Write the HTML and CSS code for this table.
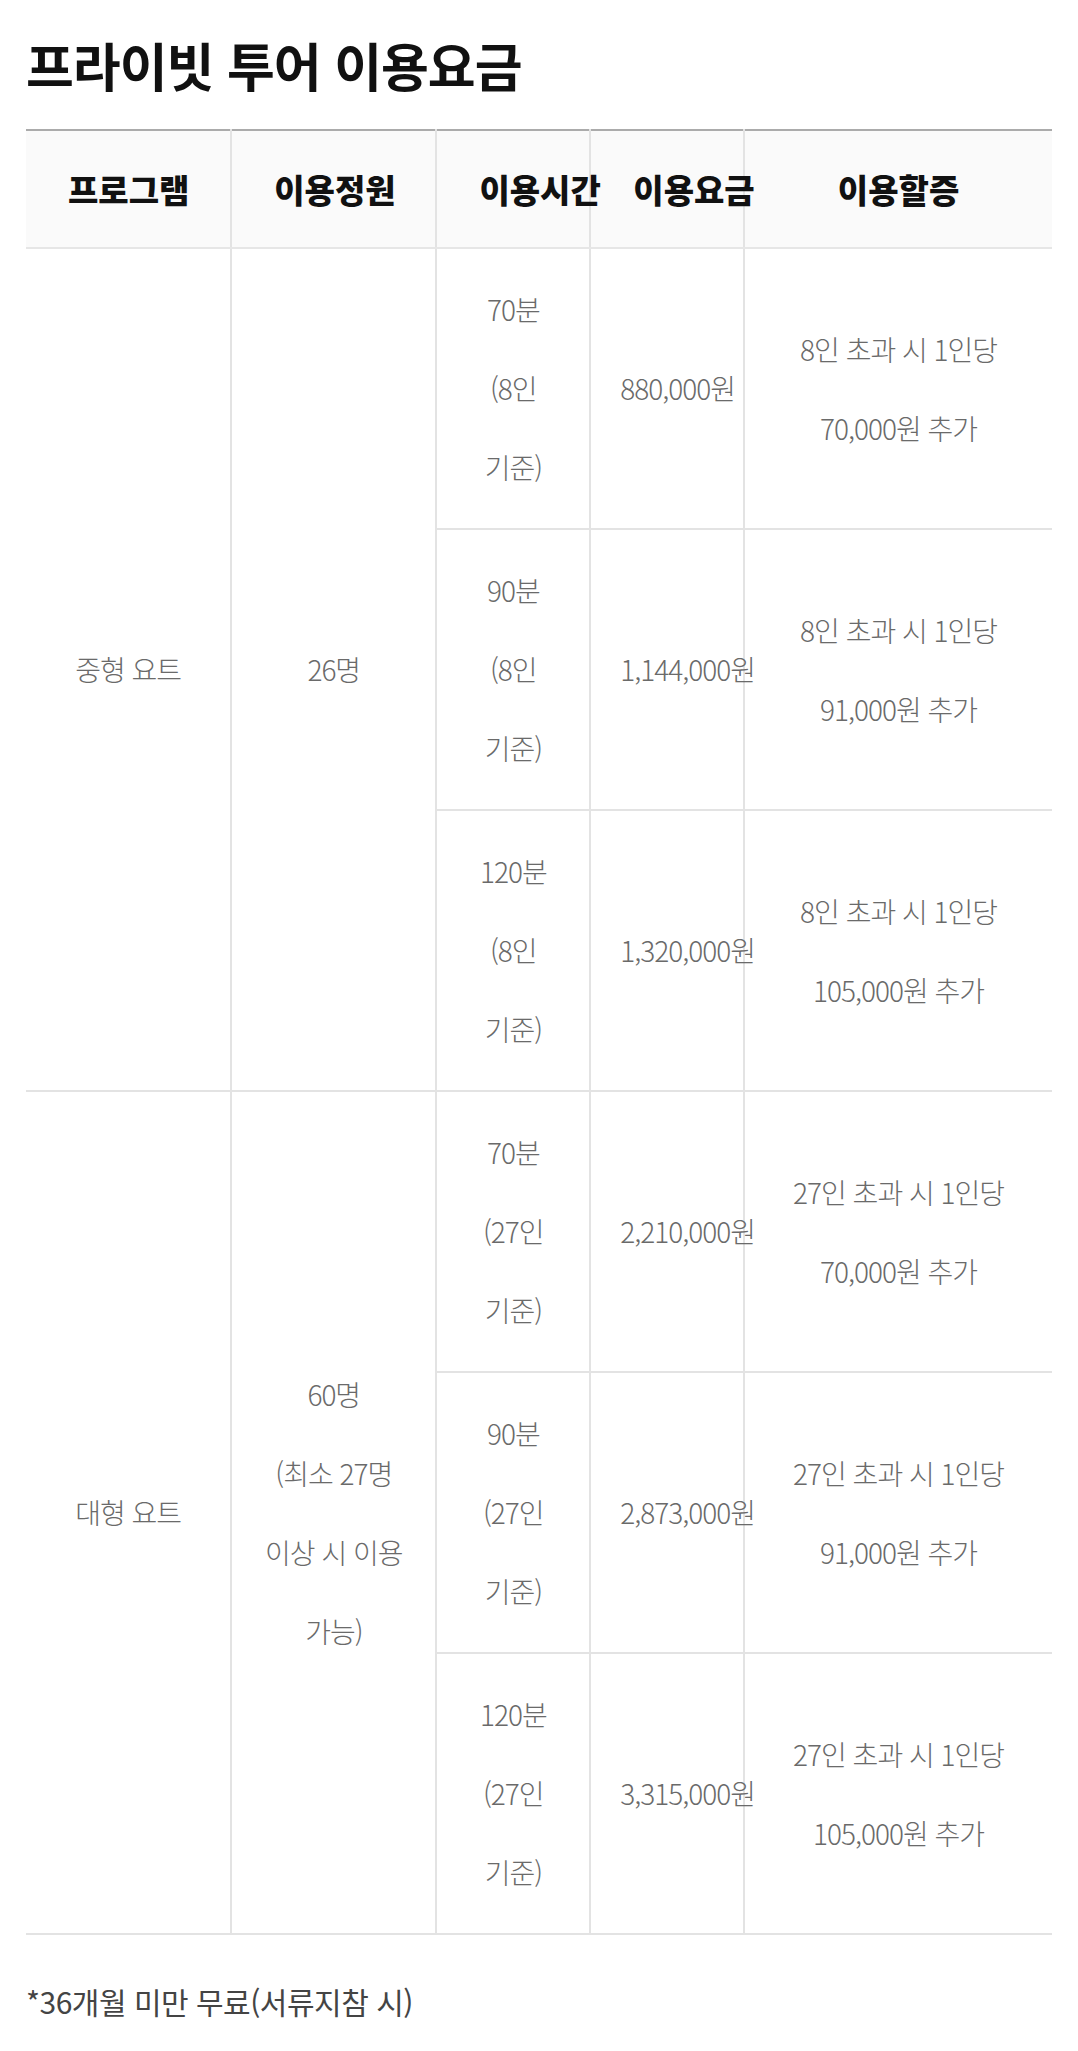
FILE: index.html
```html
<!DOCTYPE html>
<html lang="ko">
<head>
<meta charset="utf-8">
<title>프라이빗 투어 이용요금</title>
<link rel="stylesheet" href="styles.css">
</head>
<body>
<div class="page">
  <h1 class="title">프라이빗 투어 이용요금</h1>
  <table class="price-table">
    <colgroup>
      <col class="w20"><col class="w20"><col class="w15"><col class="w15"><col class="w30">
    </colgroup>
    <thead>
      <tr>
        <th class="c-first">프로그램</th>
        <th>이용정원</th>
        <th>이용시간</th>
        <th>이용요금</th>
        <th>이용할증</th>
      </tr>
    </thead>
    <tbody>
      <tr>
        <td class="c-first" rowspan="3">중형 요트</td>
        <td rowspan="3">26명</td>
        <td>70분 (8인 기준)</td>
        <td>880,000원</td>
        <td>8인 초과 시 1인당 70,000원 추가</td>
      </tr>
      <tr>
        <td>90분 (8인 기준)</td>
        <td>1,144,000원</td>
        <td>8인 초과 시 1인당 91,000원 추가</td>
      </tr>
      <tr>
        <td>120분 (8인 기준)</td>
        <td>1,320,000원</td>
        <td>8인 초과 시 1인당 105,000원 추가</td>
      </tr>
      <tr>
        <td class="c-first" rowspan="3">대형 요트</td>
        <td rowspan="3">60명<br>(최소 27명<br>이상 시 이용<br>가능)</td>
        <td>70분 (27인 기준)</td>
        <td>2,210,000원</td>
        <td>27인 초과 시 1인당 70,000원 추가</td>
      </tr>
      <tr>
        <td>90분 (27인 기준)</td>
        <td>2,873,000원</td>
        <td>27인 초과 시 1인당 91,000원 추가</td>
      </tr>
      <tr>
        <td>120분 (27인 기준)</td>
        <td>3,315,000원</td>
        <td>27인 초과 시 1인당 105,000원 추가</td>
      </tr>
    </tbody>
  </table>
  <p class="note">*36개월 미만 무료(서류지참 시)</p>
</div>
</body>
</html>
```

FILE: styles.css
```css
html, body {
  margin: 0;
  padding: 0;
  background: #ffffff;
}

body {
  font-family: "Noto Sans CJK KR", "Noto Sans", sans-serif;
}

.page {
  padding: 29px 26px 0;
}

.title {
  margin: 0 0 28px;
  font-size: 52px;
  line-height: 72px;
  font-weight: 700;
  letter-spacing: -1px;
  color: #111111;
}

.price-table {
  width: 100%;
  border-collapse: collapse;
  table-layout: fixed;
  border-top: 2px solid #ababab;
  word-break: keep-all;
}

.w20 { width: 20%; }
.w15 { width: 15%; }
.w30 { width: 30%; }

.price-table th {
  background: #fafafa;
  font-size: 33px;
  font-weight: 900;
  color: #111111;
  line-height: 80px;
  padding: 18px 42px;
  text-align: center;
  white-space: nowrap;
  border-left: 2px solid #e3e3e3;
  border-bottom: 2px solid #e6e6e6;
}

.price-table td {
  font-size: 28px;
  font-weight: 300;
  color: #6a6a6a;
  letter-spacing: -1px;
  line-height: 79px;
  padding: 21px 29px;
  text-align: center;
  vertical-align: middle;
  border-left: 2px solid #e3e3e3;
  border-bottom: 2px solid #e3e3e3;
}

.price-table .c-first {
  border-left: none;
}

.note {
  margin: 46px 0 0;
  font-size: 30px;
  line-height: 40px;
  color: #444444;
  letter-spacing: -0.5px;
}
```
